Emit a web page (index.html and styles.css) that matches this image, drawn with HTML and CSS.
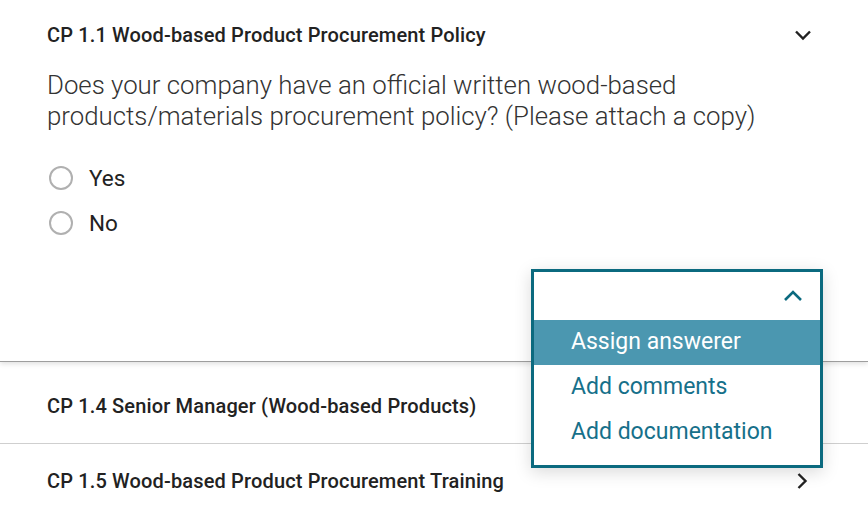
FILE: index.html
```html
<!DOCTYPE html>
<html>
<head>
<meta charset="utf-8">
<link rel="stylesheet" href="styles.css">
</head>
<body>
<div class="page">
  <section class="card">
    <div class="card-head">
      <span class="title">CP 1.1 Wood-based Product Procurement Policy</span>
      <svg class="chev" width="20" height="20" viewBox="0 0 20 20"><path d="M3 6.5 L10 13.5 L17 6.5" fill="none" stroke="#222" stroke-width="2.4"/></svg>
    </div>
    <p class="question">Does your company have an official written wood-based products/materials procurement policy? (Please attach a copy)</p>
    <div class="options">
      <label class="opt"><span class="radio"></span>Yes</label>
      <label class="opt"><span class="radio"></span>No</label>
    </div>
    <div class="menu">
      <div class="menu-top">
        <svg width="20" height="14" viewBox="0 0 20 14"><path d="M2 11 L10 3 L18 11" fill="none" stroke="#0b6a7f" stroke-width="2.6"/></svg>
      </div>
      <div class="item active">Assign answerer</div>
      <div class="item">Add comments</div>
      <div class="item">Add documentation</div>
    </div>
  </section>
  <div class="row first"><span class="title">CP 1.4 Senior Manager (Wood-based Products)</span></div>
  <div class="row last"><span class="title">CP 1.5 Wood-based Product Procurement Training</span>
    <svg class="chev" width="20" height="20" viewBox="0 0 20 20"><path d="M6.5 3 L13.5 10 L6.5 17" fill="none" stroke="#222" stroke-width="2.4"/></svg>
  </div>
</div>
</body>
</html>
```
FILE: styles.css
```css
html, body { margin: 0; padding: 0; background: #fff; }
body { font-family: Roboto, "Liberation Sans", sans-serif; color: #222; }
.page { width: 868px; height: 517px; overflow: hidden; position: relative; background: #fafafa; }
.card {
  position: relative;
  z-index: 1;
  background: #fff;
  height: 361px;
  padding: 0 47px;
  border-bottom: 1px solid #9e9e9e;
  box-shadow: 0 2px 5px rgba(0,0,0,0.12);
}
.card-head {
  height: 70px;
  display: flex;
  align-items: center;
  justify-content: space-between;
  padding-right: 8px;
}
.title { font-size: 20px; font-weight: 500; color: #222; letter-spacing: 0.15px; }
.question {
  margin: 0;
  font-size: 25.8px;
  line-height: 31px;
  font-weight: 300;
  color: #333;
  width: 760px;
}
.options { margin-top: 33px; display: flex; flex-direction: column; gap: 19px; }
.opt { display: flex; align-items: center; gap: 16px; font-size: 22.5px; color: #222; padding-left: 2px; }
.radio { width: 20px; height: 20px; border: 2px solid #b0b0b0; border-radius: 50%; }
.menu {
  position: absolute;
  left: 531px;
  top: 269px;
  width: 286px;
  height: 193px;
  border: 3px solid #0b6a7f;
  background: #fff;
  box-shadow: 0 4px 16px rgba(0,0,0,0.15);
}
.menu-top { height: 48px; display: flex; align-items: center; justify-content: flex-end; padding-right: 17px; }
.item { height: 45px; box-sizing: border-box; padding-bottom: 3px; display: flex; align-items: center; padding-left: 37px; font-size: 23px; color: #16708a; }
.item.active { background: #4b97b0; color: #fff; }
.row {
  display: flex;
  align-items: center;
  justify-content: space-between;
  padding: 0 56px 0 47px;
  background: #fff;
  box-sizing: border-box;
}
.row.first { height: 82px; padding-top: 7px; border-bottom: 1px solid #cfcfcf; }
.row.last { height: 74px; }
```
